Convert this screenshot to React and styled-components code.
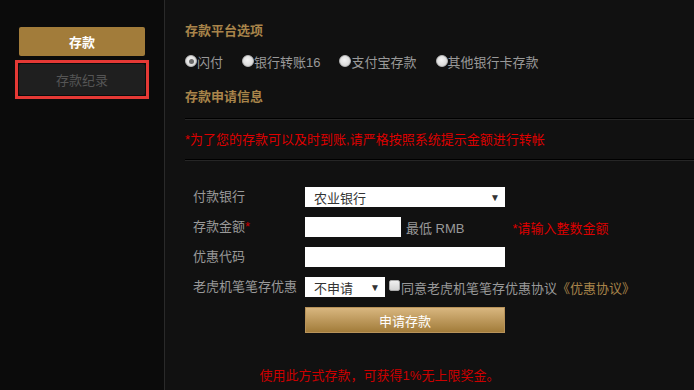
import React, { useState } from "react";
import styled, { createGlobalStyle } from "styled-components";

const GlobalStyle = createGlobalStyle`
  html, body {
    margin: 0;
    padding: 0;
    background: #111;
  }
  body {
    font-family: "Liberation Sans", "Noto Sans CJK SC", sans-serif;
    font-size: 13px;
  }
`;

const Page = styled.div`
  display: flex;
  width: 694px;
  height: 390px;
  overflow: hidden;
  background: #111;
`;

const Sidebar = styled.div`
  width: 165px;
  flex-shrink: 0;
  background: #0b0b0b;
  border-right: 1px solid #2a2a2a;
  display: flex;
  flex-direction: column;
  align-items: center;
  padding-top: 27px;
  box-sizing: border-box;
  gap: 4px;
`;

const SideButton = styled.div`
  width: 126px;
  height: ${p => (p.active ? "29px" : "31px")};
  display: flex;
  align-items: center;
  justify-content: center;
  border-radius: 2px;
  background: ${p => (p.active ? "#a27c3a" : "#1f1f1f")};
  color: ${p => (p.active ? "#fff" : "#555")};
  font-weight: ${p => (p.active ? "bold" : "normal")};
`;

const Marker = styled.div`
  border: 3px solid #e53935;
  padding: 1px 1px 1px 1px;
  margin-left: 0;
`;

const Main = styled.div`
  flex: 1;
  padding: 22px 0 0 20px;
  box-sizing: border-box;
  display: flex;
  flex-direction: column;
`;

const Title = styled.div`
  color: #a8844a;
  font-weight: bold;
  height: 18px;
  line-height: 18px;
`;

const RadioRow = styled.div`
  display: flex;
  align-items: center;
  margin: 14px 0 16px;
  color: #999;
`;

const RadioItem = styled.label`
  display: flex;
  align-items: center;
  margin-right: 19px;
  line-height: 18px;
`;

const RadioDot = styled.span`
  width: 12px;
  height: 12px;
  border-radius: 50%;
  background: radial-gradient(circle at 45% 40%, #f4f4f4, #cfcfcf);
  box-sizing: border-box;
  border: 1px solid #b8b8b8;
  margin-top: -4px;
  display: flex;
  align-items: center;
  justify-content: center;
  &::after {
    content: "";
    width: 5px;
    height: 5px;
    border-radius: 50%;
    background: ${p => (p.checked ? "#6a6a6a" : "transparent")};
  }
`;

const Divider = styled.div`
  height: 1px;
  background: #000;
  border-bottom: 1px solid #262626;
`;

const Notice = styled.div`
  color: #d00;
  height: 18px;
  line-height: 18px;
  margin: 11px 0 10px;
`;

const Form = styled.div`
  display: grid;
  grid-template-columns: 112px auto;
  row-gap: 10px;
  padding: 26px 0 0 8px;
  align-items: center;
`;

const Label = styled.div`
  color: #999;
  line-height: 20px;
`;

const Star = styled.span`
  color: #c00;
`;

const Field = styled.div`
  display: flex;
  align-items: center;
  color: #999;
  height: 20px;
`;

const SelectBox = styled.div`
  width: ${p => p.w}px;
  height: 20px;
  background: #fff;
  color: #333;
  display: flex;
  align-items: center;
  justify-content: space-between;
  padding: 0 5px 0 9px;
  box-sizing: border-box;
  span:last-child {
    font-size: 10px;
    color: #333;
  }
`;

const TextInput = styled.input`
  width: ${p => p.w}px;
  height: 20px;
  border: none;
  padding: 0 4px;
  box-sizing: border-box;
  background: #fff;
  outline: none;
  font: inherit;
`;

const Hint = styled.span`
  margin-left: 5px;
  color: #999;
`;

const RedHint = styled.span`
  margin-left: 48px;
  color: #d00;
`;

const Check = styled.span`
  width: 11px;
  height: 11px;
  border-radius: 2px;
  background: linear-gradient(#f0f0f0, #d4d4d4);
  border: 1px solid #aaa;
  box-sizing: border-box;
  margin: -4px 1px 0 4px;
`;

const Gold = styled.span`
  color: #a8844a;
`;

const Submit = styled.button`
  grid-column: 2;
  width: 200px;
  height: 26px;
  margin-top: 0;
  border: 1px solid #b8935a;
  background: linear-gradient(#d8b67f, #a27c3a);
  color: #fff;
  font: inherit;
  cursor: pointer;
`;

const Footer = styled.div`
  color: #c00;
  text-align: center;
  padding-right: 120px;
  margin-top: 32px;
`;

const methods = ["闪付", "银行转账16", "支付宝存款", "其他银行卡存款"];

export default function App() {
  const [method, setMethod] = useState(0);
  return (
    <>
      <GlobalStyle />
      <Page>
        <Sidebar>
          <SideButton active>存款</SideButton>
          <Marker>
            <SideButton>存款纪录</SideButton>
          </Marker>
        </Sidebar>
        <Main>
          <Title>存款平台选项</Title>
          <RadioRow>
            {methods.map((m, i) => (
              <RadioItem key={m} onClick={() => setMethod(i)}>
                <RadioDot checked={method === i} />
                {m}
              </RadioItem>
            ))}
          </RadioRow>
          <Title>存款申请信息</Title>
          <div style={{ height: 12 }} />
          <Divider />
          <Notice>*为了您的存款可以及时到账,请严格按照系统提示金额进行转帐</Notice>
          <Divider />
          <Form>
            <Label>付款银行</Label>
            <Field>
              <SelectBox w={200}>
                <span>农业银行</span>
                <span>▼</span>
              </SelectBox>
            </Field>
            <Label>
              存款金额<Star>*</Star>
            </Label>
            <Field>
              <TextInput w={96} />
              <Hint>最低 RMB</Hint>
              <RedHint>*请输入整数金额</RedHint>
            </Field>
            <Label>优惠代码</Label>
            <Field>
              <TextInput w={200} />
            </Field>
            <Label>老虎机笔笔存优惠</Label>
            <Field>
              <SelectBox w={80}>
                <span>不申请</span>
                <span>▼</span>
              </SelectBox>
              <Check />
              同意老虎机笔笔存优惠协议<Gold>《优惠协议》</Gold>
            </Field>
            <Submit>申请存款</Submit>
          </Form>
          <Footer>使用此方式存款，可获得1%无上限奖金。</Footer>
        </Main>
      </Page>
    </>
  );
}
